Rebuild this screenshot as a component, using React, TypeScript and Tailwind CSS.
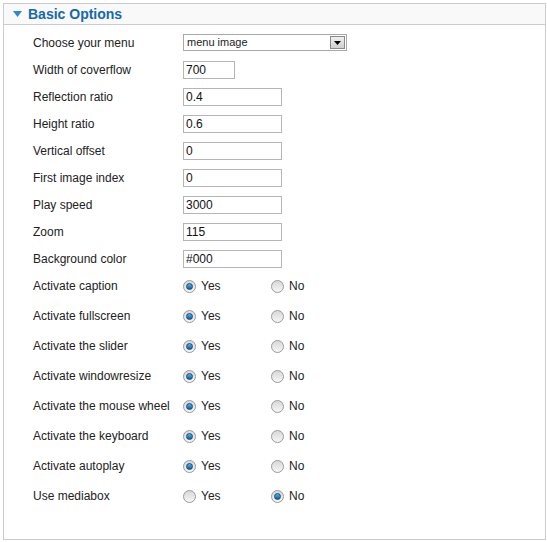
import { useState } from "react";

const textFields = [
	{ label: "Width of coverflow", value: "700", w: "w-[52px]" },
	{ label: "Reflection ratio", value: "0.4", w: "w-[99px]" },
	{ label: "Height ratio", value: "0.6", w: "w-[99px]" },
	{ label: "Vertical offset", value: "0", w: "w-[99px]" },
	{ label: "First image index", value: "0", w: "w-[99px]" },
	{ label: "Play speed", value: "3000", w: "w-[99px]" },
	{ label: "Zoom", value: "115", w: "w-[99px]" },
	{ label: "Background color", value: "#000", w: "w-[99px]" },
];

const radioFields = [
	{ label: "Activate caption", yes: true },
	{ label: "Activate fullscreen", yes: true },
	{ label: "Activate the slider", yes: true },
	{ label: "Activate windowresize", yes: true },
	{ label: "Activate the mouse wheel", yes: true },
	{ label: "Activate the keyboard", yes: true },
	{ label: "Activate autoplay", yes: true },
	{ label: "Use mediabox", yes: false },
];

function Radio({ checked, label }: { checked: boolean; label: string }) {
	return (
		<span className="flex items-center gap-[5px]">
			<span className="flex h-[13px] w-[13px] items-center justify-center rounded-full border border-[#9a9a9a] bg-gradient-to-b from-[#d8d8d8] to-[#f6f6f6]">
				{checked && (
					<span className="h-[7px] w-[7px] rounded-full border border-[#0d4d7a] bg-gradient-to-b from-[#5ab0e8] to-[#135f9a]" />
				)}
			</span>
			<span className="text-[12px] text-[#222]">{label}</span>
		</span>
	);
}

export default function App() {
	const [open] = useState(true);

	return (
		<div className="h-[542px] w-[547px] bg-white p-[3px] font-['Liberation_Sans',Arial,sans-serif]">
			<div className="flex h-[537px] w-[543px] flex-col border border-[#cccccc]">
				{/* header */}
				<div className="flex h-[21px] items-center gap-[6px] border-b border-[#cccccc] bg-[#f9f9f9] pl-[9px]">
					<svg width="9" height="6" viewBox="0 0 9 6">
						<path d="M0 0 H9 L4.5 6 Z" fill="#2a8ad0" />
					</svg>
					<span className="text-[14px] font-bold text-[#146aae]">Basic Options</span>
				</div>

				{open && (
					<div className="flex flex-col pl-[29px] pt-[4px]">
						<div className="flex h-[27px] items-center">
							<span className="w-[150px] text-[12px] text-[#222]">Choose your menu</span>
							<div className="flex h-[17px] w-[164px] items-center justify-between border border-[#a9a9a9] bg-white pl-[3px]">
								<span className="text-[11px] text-[#222]">menu image</span>
								<span className="m-[1px] flex h-[13px] w-[15px] items-center justify-center border border-[#8a8a8a] bg-gradient-to-b from-[#f0f0f0] to-[#cfcfcf]">
									<svg width="7" height="4" viewBox="0 0 7 4">
										<path d="M0 0 H7 L3.5 4 Z" fill="#000" />
									</svg>
								</span>
							</div>
						</div>

						{textFields.map((f) => (
							<div key={f.label} className="flex h-[27px] items-center">
								<span className="w-[150px] text-[12px] text-[#222]">{f.label}</span>
								<div
									className={`${f.w} flex h-[18px] items-center border border-[#b5b5b5] bg-white pl-[2px] text-[12px] text-[#111]`}
								>
									{f.value}
								</div>
							</div>
						))}

						<div className="mt-[-1px] flex flex-col">
							{radioFields.map((f) => (
								<div key={f.label} className="flex h-[30px] items-center">
									<span className="w-[150px] text-[12px] text-[#222]">{f.label}</span>
									<div className="w-[88px]">
										<Radio checked={f.yes} label="Yes" />
									</div>
									<Radio checked={!f.yes} label="No" />
								</div>
							))}
						</div>
					</div>
				)}
			</div>
		</div>
	);
}
